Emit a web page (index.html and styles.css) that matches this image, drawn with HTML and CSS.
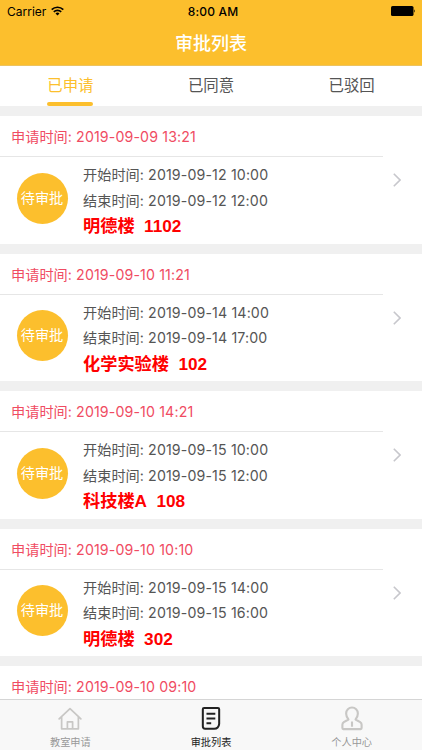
FILE: index.html
```html
<!DOCTYPE html>
<html lang="zh-CN">
<head>
<meta charset="utf-8">
<title>审批列表</title>
<link rel="stylesheet" href="styles.css">
</head>
<body>
<div class="app">
  <header class="header">
    <div class="status">
      <div class="carrier">Carrier
        <svg class="wifi" viewBox="0 0 13 10"><g fill="none" stroke="#000" stroke-width="1.7"><path d="M.7 3.6a8.3 8.3 0 0 1 11.6 0"/><path d="M2.8 5.9a5.3 5.3 0 0 1 7.4 0"/></g><path d="M6.5 9.6 4.5 7.5a2.9 2.9 0 0 1 4 0z"/></svg>
      </div>
      <div class="clock">8:00 AM</div>
      <svg class="battery" viewBox="0 0 25 10"><rect width="22.5" height="10" rx="1.6"/><path d="M23.2 3.2q1.6 1.8 0 3.6z"/></svg>
    </div>
    <h1 class="title">审批列表</h1>
  </header>
  <nav class="tabs">
    <div class="tab active"><span>已申请</span></div>
    <div class="tab"><span>已同意</span></div>
    <div class="tab"><span>已驳回</span></div>
  </nav>
  <main class="list">
    <article class="card">
      <div class="applied">申请时间<span class="num">: 2019-09-09 13:21</span></div>
      <div class="body">
        <div class="badge">待审批</div>
        <div class="info">
          <p>开始时间<span class="num">: 2019-09-12 10:00</span></p>
          <p>结束时间<span class="num">: 2019-09-12 12:00</span></p>
          <p class="room">明德楼<b>1102</b></p>
        </div>
        <svg class="chevron" viewBox="0 0 8 14"><path d="M.8.8 7 7 .8 13.2"/></svg>
      </div>
    </article>
    <article class="card">
      <div class="applied">申请时间<span class="num">: 2019-09-10 11:21</span></div>
      <div class="body">
        <div class="badge">待审批</div>
        <div class="info">
          <p>开始时间<span class="num">: 2019-09-14 14:00</span></p>
          <p>结束时间<span class="num">: 2019-09-14 17:00</span></p>
          <p class="room">化学实验楼<b>102</b></p>
        </div>
        <svg class="chevron" viewBox="0 0 8 14"><path d="M.8.8 7 7 .8 13.2"/></svg>
      </div>
    </article>
    <article class="card">
      <div class="applied">申请时间<span class="num">: 2019-09-10 14:21</span></div>
      <div class="body">
        <div class="badge">待审批</div>
        <div class="info">
          <p>开始时间<span class="num">: 2019-09-15 10:00</span></p>
          <p>结束时间<span class="num">: 2019-09-15 12:00</span></p>
          <p class="room">科技楼A<b>108</b></p>
        </div>
        <svg class="chevron" viewBox="0 0 8 14"><path d="M.8.8 7 7 .8 13.2"/></svg>
      </div>
    </article>
    <article class="card">
      <div class="applied">申请时间<span class="num">: 2019-09-10 10:10</span></div>
      <div class="body">
        <div class="badge">待审批</div>
        <div class="info">
          <p>开始时间<span class="num">: 2019-09-15 14:00</span></p>
          <p>结束时间<span class="num">: 2019-09-15 16:00</span></p>
          <p class="room">明德楼<b>302</b></p>
        </div>
        <svg class="chevron" viewBox="0 0 8 14"><path d="M.8.8 7 7 .8 13.2"/></svg>
      </div>
    </article>
    <article class="card">
      <div class="applied">申请时间<span class="num">: 2019-09-10 09:10</span></div>
    </article>
  </main>
  <footer class="tabbar">
    <div class="item">
      <svg viewBox="0 0 26 26"><g fill="none" stroke="#c8c7c5" stroke-width="1.8" stroke-linejoin="round" stroke-linecap="round"><path d="M1.7 13.300 13 2.800 24.300 13.300M4.300 11.500V23.700H21.700V11.500M10.300 23.500V16.500H15.700V23.500"/></g></svg>
      <span>教室申请</span>
    </div>
    <div class="item current">
      <svg viewBox="0 0 26 26"><g fill="none" stroke="#222" stroke-width="2.100" stroke-linejoin="round"><path d="M5.800 2H20.200Q21.500 2 21.500 3.300V18.500Q21 23.500 16.200 23.700H7Q4.500 23.500 4.500 21V3.300Q4.500 2 5.800 2Z"/><path d="M8.300 8H17.500M8.300 13H17.500M8.300 18H13.200"/></g></svg>
      <span>审批列表</span>
    </div>
    <div class="item">
      <svg viewBox="0 0 26 26"><g fill="none" stroke="#c8c7c5" stroke-width="2.200" stroke-linejoin="round"><path d="M9.300 14Q6.900 11 6.900 7.700A6.100 6.100 0 0 1 19.100 7.700Q19.100 11 16.700 14L21.500 16.700Q23 17.800 23 19.500V23Q23 24 22 24H4Q3 24 3 23V19.500Q3 17.800 4.500 16.700ZM13 16V21.500"/></g></svg>
      <span>个人中心</span>
    </div>
  </footer>
</div>
</body>
</html>
```
FILE: styles.css
```css
* { box-sizing: border-box; margin: 0; padding: 0; }
body {
  font-family: Inter, "Noto Sans CJK SC", sans-serif;
  color: #555;
  background: #f0f0f0;
}
.app { height: 750px; display: flex; flex-direction: column; overflow: hidden; }
.header { height: 66px; flex: none; background: #fcbf2d; border-bottom: 1px solid #ecc360; }
.status {
  height: 22px;
  padding: 0 6px 0 7px;
  display: grid;
  grid-template-columns: 1fr auto 1fr;
  align-items: center;
  color: #000;
  font-size: 12px;
}
.carrier { display: flex; align-items: center; gap: 5px; letter-spacing: 0; }
.wifi { width: 13px; height: 10px; }
.clock { padding-left: 3px; font-weight: 500; letter-spacing: .2px; }
.battery { width: 25px; height: 10px; justify-self: end; }
.title { height: 42px; line-height: 44px; text-align: center; color: #fff; font-size: 18px; font-weight: 500; }
.tabs { height: 40px; flex: none; display: flex; background: #fff; }
.tab { flex: 1; display: flex; justify-content: center; font-size: 15.4px; line-height: 40px; }
.tab span { display: flex; flex-direction: column; height: 40px; }
.tab.active { color: #fcbf2d; }
.tab.active span::after { content: ""; height: 4px; flex: none; margin-top: -4px; border-radius: 2px; background: #fcbf2d; }
.list { flex: 1; min-height: 0; overflow: hidden; padding-top: 10px; }
.card { height: 127.500px; margin-bottom: 10px; background: #fff; }
.applied {
  width: 383px;
  height: 41px;
  padding-left: 11px;
  border-bottom: 1px solid #e6e6e6;
  color: #f04b62;
  font-size: 14.200px;
  line-height: 42px;
}
.body { height: 86px; padding: 0 21px 0 16.500px; display: flex; }
.badge {
  width: 51px;
  height: 51px;
  flex: none;
  margin-top: 15.500px;
  border-radius: 50%;
  background: #fcbf2d;
  color: #fff;
  font-size: 14.200px;
  line-height: 50px;
  text-align: center;
}
.info { flex: 1; margin-left: 15.500px; padding-top: 5px; font-size: 14.200px; line-height: 25.500px; white-space: nowrap; }
.num { letter-spacing: .13px; }
.room { color: #f00; font-family: "Liberation Sans", "Noto Sans CJK SC", sans-serif; font-size: 17.200px; font-weight: 700; line-height: 27px; }
.room b { margin-left: 9.500px; }
.chevron { width: 8px; height: 14px; margin-top: 16px; fill: none; stroke: #c7c7cc; stroke-width: 1.600; }
.tabbar { height: 51px; flex: none; display: flex; background: #f8f8f8; border-top: 1px solid #d5d5d5; }
.item { flex: 1; display: flex; flex-direction: column; align-items: center; padding-top: 6px; color: #999; font-size: 10.200px; line-height: 15px; }
.item svg { width: 26px; height: 26px; margin-bottom: 4px; }
.item.current { color: #222; }
```
